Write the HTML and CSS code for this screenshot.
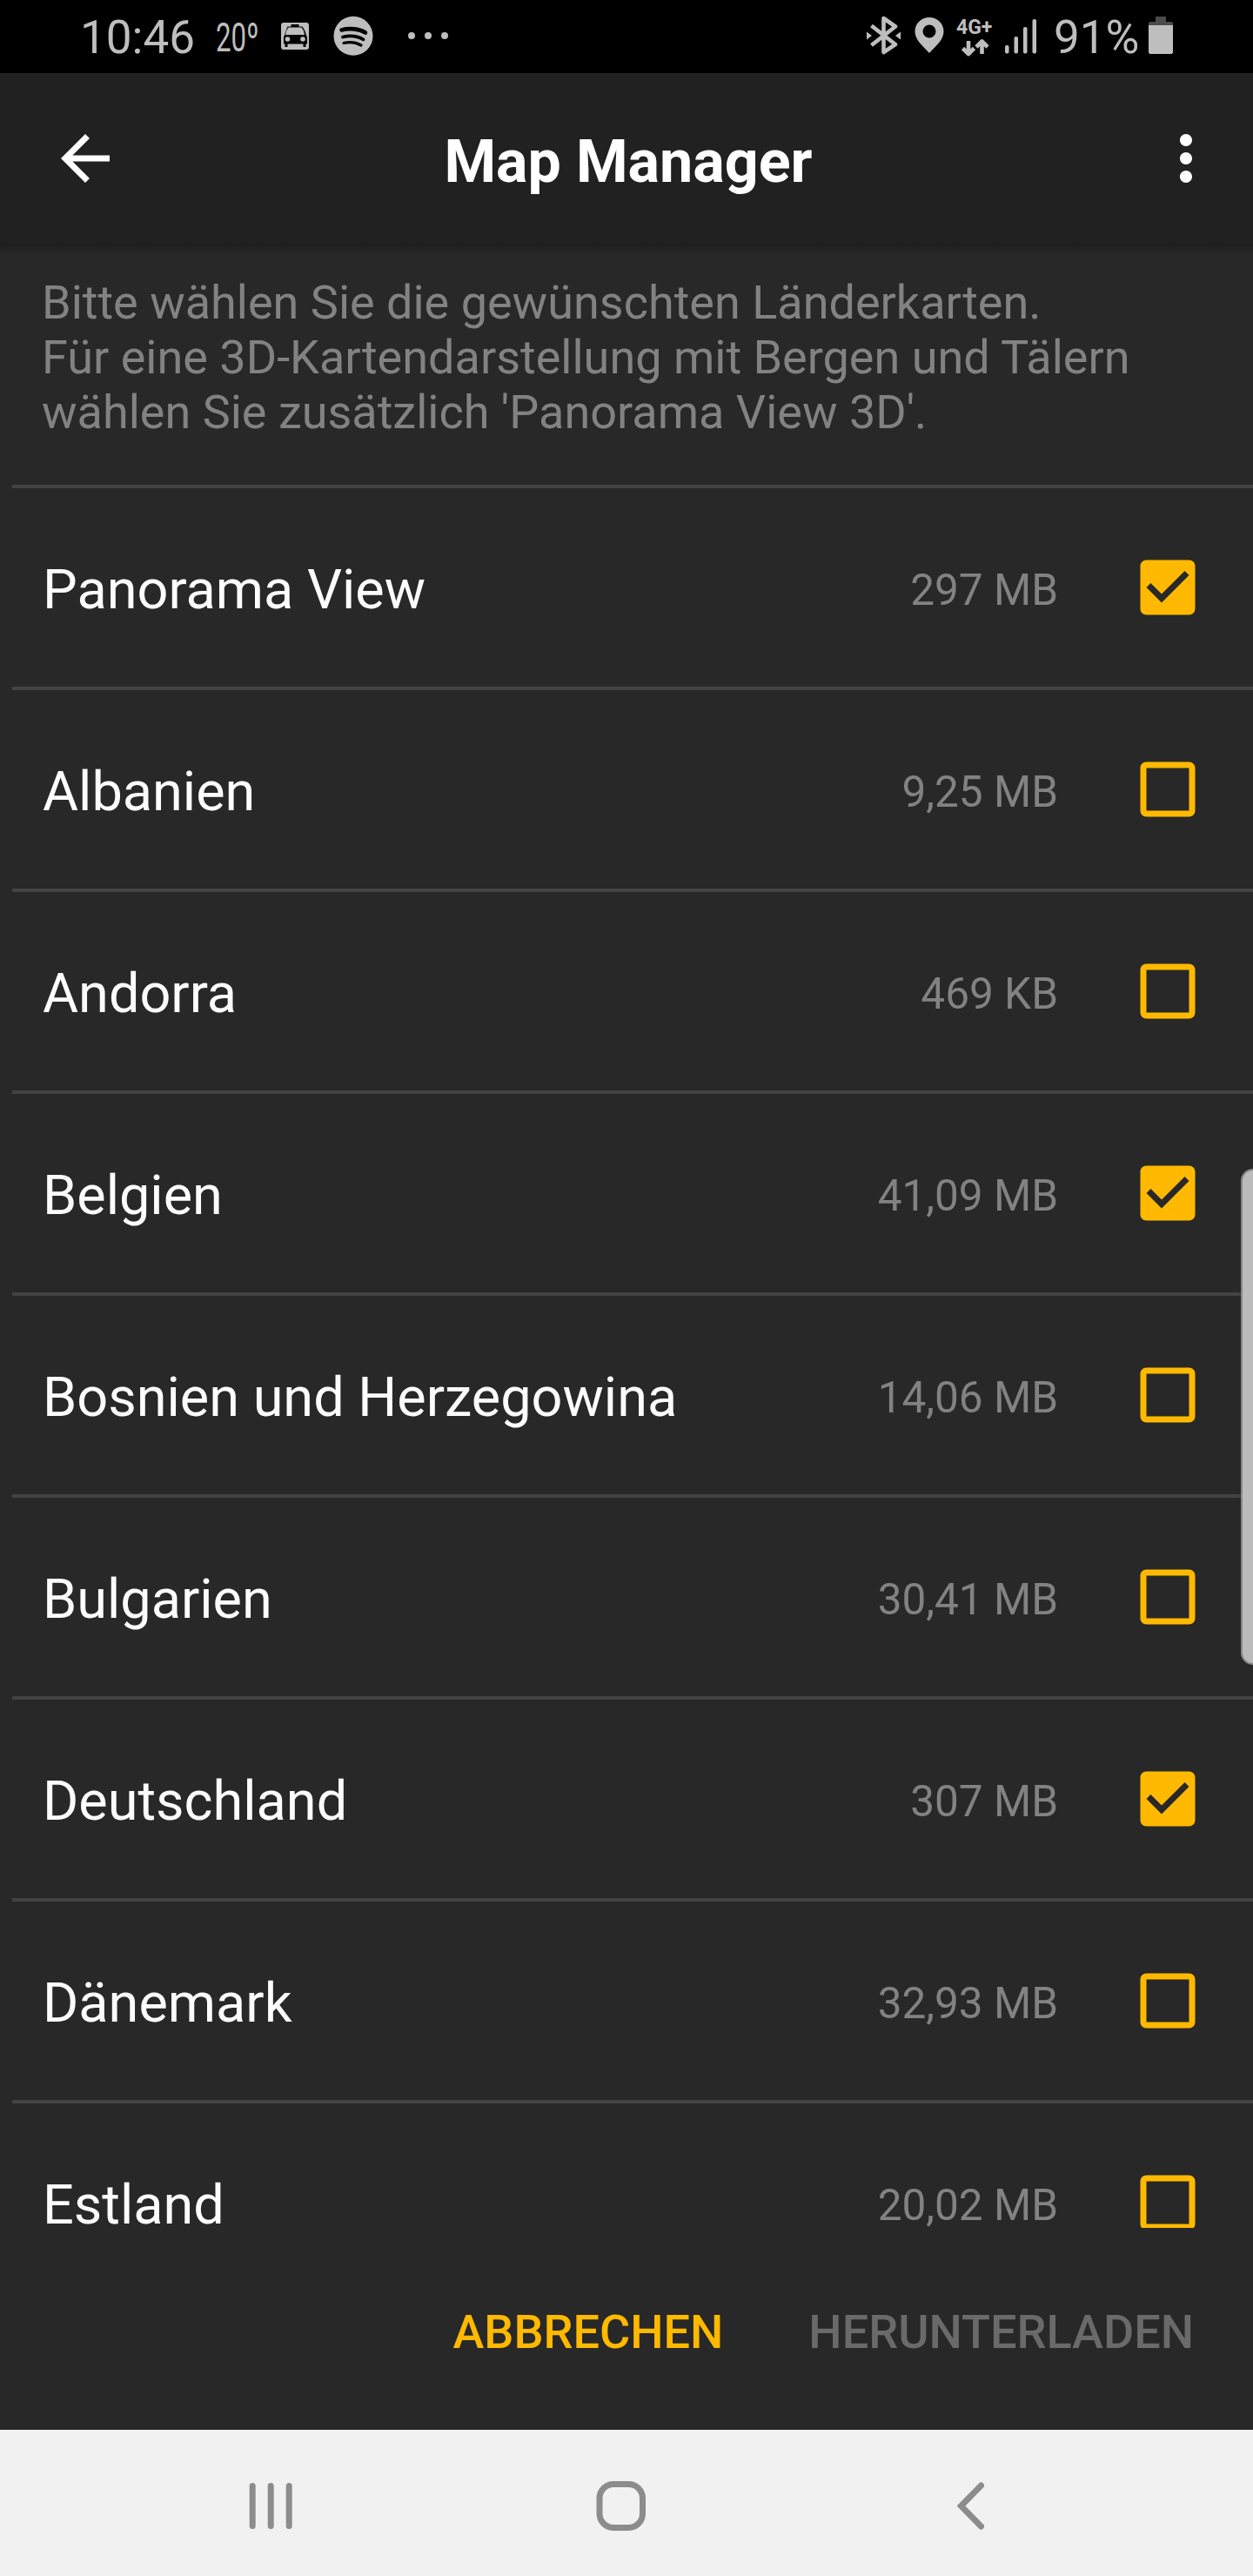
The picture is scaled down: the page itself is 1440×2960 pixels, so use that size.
FILE: index.html
```html
<!DOCTYPE html>
<html lang="de">
<head>
    <meta charset="utf-8">
    <title>Map Manager</title>
    <link rel="stylesheet" href="styles.css">
</head>
<body>
    <svg class="defs">
        <symbol id="box" viewBox="0 0 24 24">
            <path d="M19 5v14H5V5h14m0-2H5c-1.1 0-2 .9-2 2v14c0 1.1.9 2 2 2h14c1.1 0 2-.9 2-2V5c0-1.1-.9-2-2-2z"/>
        </symbol>
        <symbol id="box-checked" viewBox="0 0 24 24">
            <path d="M19 3H5c-1.11 0-2 .9-2 2v14c0 1.1.89 2 2 2h14c1.11 0 2-.9 2-2V5c0-1.1-.89-2-2-2zm-9 14l-5-5 1.41-1.41L10 14.17l7.59-7.59L19 8l-9 9z"/>
        </symbol>
    </svg>

    <div class="screen">
        <div class="statusbar">
            <span class="time">10:46</span>
            <span class="temp">20º</span>
            <svg class="icon-car" width="32" height="84" viewBox="323 0 32 84">
                <rect x="323" y="26" width="32" height="31" rx="3"/>
                <path class="cut" d="M330.500 30.500h4v-2.500h9v2.500h4l3 5 1.500 5 1 2v8h-1.500v3.500h-3v-3.500h-18v3.500h-3v-3.500h-1.500v-8l1-2 1.500-5z"/>
                <path d="M331.500 31.500h15l2.500 4 1 4.500h-22l1-4.500z"/>
                <circle cx="330.500" cy="45" r="2.800"/>
                <circle cx="348" cy="45" r="2.800"/>
            </svg>
            <svg class="icon-music" width="46" height="84" viewBox="383.500 0 46 84">
                <circle cx="406.500" cy="41.300" r="22.500"/>
                <path class="wave" stroke-width="4.600" d="M393 34.500c9-2.500 20-1.500 27.500 3"/>
                <path class="wave" stroke-width="3.800" d="M394.500 42.500c8-2 17-1 23.500 2.800"/>
                <path class="wave" stroke-width="3.200" d="M395.500 49.500c7-1.500 14-.8 20 2.500"/>
            </svg>
            <svg class="icon-more" width="48" height="84" viewBox="468 0 48 84">
                <circle cx="473" cy="41" r="4"/>
                <circle cx="492" cy="41" r="4"/>
                <circle cx="511" cy="41" r="4"/>
            </svg>
            <svg class="icon-bt" width="40" height="84" viewBox="996 0 40 84">
                <path class="line" d="M1001.500 29.500l27.500 21.500-13.500 9V21l13.500 9.500-27.500 21.500"/>
                <path d="M996 36.500l6 4.500-6 4.500zM1035 36.500l-6 4.500 6 4.500z"/>
            </svg>
            <svg class="icon-pin" width="34" height="84" viewBox="1050.500 0 34 84">
                <path fill-rule="evenodd" d="M1067.500 20c-9.300 0-16.500 7-16.500 16 0 10 8.500 16 16.500 25 8-9 16.500-15 16.500-25 0-9-7.200-16-16.500-16zm0 8.500a7.500 7.500 0 1 1 0 15 7.500 7.500 0 0 1 0-15z"/>
            </svg>
            <div class="network">
                <span class="network-type">4G+</span>
                <svg width="34" height="20" viewBox="1103 45 34 20">
                    <path class="arrow" d="M1112 47v14M1105.500 55.500l6.500 6.500 6.500-6.500M1127.500 62V48M1121 54l6.500-6.500 6.500 6.500"/>
                </svg>
            </div>
            <svg class="icon-signal" width="38" height="84" viewBox="1154 0 38 84">
                <rect x="1155" y="52" width="4.500" height="9.500" rx="2"/>
                <rect x="1165.500" y="42" width="4.500" height="19.500" rx="2"/>
                <rect x="1176" y="31" width="4.500" height="30.500" rx="2"/>
                <rect x="1186.500" y="22" width="4.500" height="39.500" rx="2"/>
            </svg>
            <span class="percent">91%</span>
            <svg class="icon-battery" width="28" height="84" viewBox="1320 0 28 84">
                <path class="dim" d="M1328 19h12v6h6.500l1.500 1.500V30h-28v-3.500l1.500-1.500h6.500z"/>
                <path d="M1320 29h28v31.500l-1.500 1.500h-25l-1.500-1.500z"/>
            </svg>
        </div>

        <div class="appbar">
            <svg class="back" width="84" height="84" viewBox="0 0 24 24">
                <path d="M20 11H7.830l5.590-5.590L12 4l-8 8 8 8 1.410-1.410L7.830 13H20v-2z"/>
            </svg>
            <h1>Map Manager</h1>
            <svg class="menu" width="84" height="84" viewBox="0 0 24 24">
                <path d="M12 8c1.100 0 2-.9 2-2s-.9-2-2-2-2 .9-2 2 .9 2 2 2zm0 2c-1.100 0-2 .9-2 2s.9 2 2 2 2-.9 2-2-.9-2-2-2zm0 6c-1.100 0-2 .9-2 2s.9 2 2 2 2-.9 2-2-.9-2-2-2z"/>
            </svg>
        </div>

        <div class="content">
            <p class="intro">Bitte wählen Sie die gewünschten Länderkarten.<br>Für eine 3D-Kartendarstellung mit Bergen und Tälern<br>wählen Sie zusätzlich 'Panorama View 3D'.</p>
            <div class="maps">
                <div class="map">
                    <span class="name">Panorama View</span>
                    <span class="size">297 MB</span>
                    <svg class="check"><use href="#box-checked"/></svg>
                </div>
                <div class="map">
                    <span class="name">Albanien</span>
                    <span class="size">9,25 MB</span>
                    <svg class="check"><use href="#box"/></svg>
                </div>
                <div class="map">
                    <span class="name">Andorra</span>
                    <span class="size">469 KB</span>
                    <svg class="check"><use href="#box"/></svg>
                </div>
                <div class="map">
                    <span class="name">Belgien</span>
                    <span class="size">41,09 MB</span>
                    <svg class="check"><use href="#box-checked"/></svg>
                </div>
                <div class="map">
                    <span class="name">Bosnien und Herzegowina</span>
                    <span class="size">14,06 MB</span>
                    <svg class="check"><use href="#box"/></svg>
                </div>
                <div class="map">
                    <span class="name">Bulgarien</span>
                    <span class="size">30,41 MB</span>
                    <svg class="check"><use href="#box"/></svg>
                </div>
                <div class="map">
                    <span class="name">Deutschland</span>
                    <span class="size">307 MB</span>
                    <svg class="check"><use href="#box-checked"/></svg>
                </div>
                <div class="map">
                    <span class="name">Dänemark</span>
                    <span class="size">32,93 MB</span>
                    <svg class="check"><use href="#box"/></svg>
                </div>
                <div class="map">
                    <span class="name">Estland</span>
                    <span class="size">20,02 MB</span>
                    <svg class="check"><use href="#box"/></svg>
                </div>
            </div>
        </div>

        <div class="actions">
            <span class="cancel">ABBRECHEN</span>
            <span class="download">HERUNTERLADEN</span>
        </div>

        <div class="navbar">
            <svg width="50" height="60" viewBox="286 2850 50 60">
                <path d="M290.200 2856.500v46M311.200 2856.500v46M332.200 2856.500v46"/>
            </svg>
            <svg class="home" width="60" height="60" viewBox="684 2850 60 60">
                <rect x="689" y="2854.500" width="49.500" height="50" rx="16"/>
            </svg>
            <svg width="34" height="60" viewBox="1099 2850 34 60">
                <path d="M1127.500 2856l-23 23.500 23 23.500"/>
            </svg>
        </div>

        <!-- edge panel handle -->
        <div class="edge-handle"></div>
    </div>
</body>
</html>
```
FILE: styles.css
```css
body {
    margin: 0;
    background-color: #282828;
    font-family: Roboto, sans-serif;
}
.defs {
    display: none;
}
.screen {
    position: relative;
    width: 1440px;
    height: 2960px;
    display: flex;
    flex-direction: column;
    overflow: hidden;
}

/* status bar */
.statusbar {
    display: flex;
    align-items: center;
    height: 84px;
    flex: none;
    background-color: #000;
    color: #bebebe;
    fill: #bebebe;
}
.statusbar svg,
.statusbar span {
    flex: none;
    white-space: nowrap;
}
.time {
    width: 132px;
    margin-left: 92px;
    padding-top: 2px;
    font-size: 53px;
}
.temp {
    width: 76px;
    margin-left: 24px;
    margin-right: -1px;
    padding-top: 2px;
    font-size: 46px;
    transform: scaleX(0.68);
    transform-origin: left;
}
.icon-music {
    margin-left: 28px;
}
.icon-more {
    margin-left: 39px;
}
.icon-bt {
    margin-left: 480px;
}
.icon-pin {
    margin-left: 15px;
}
.network {
    display: flex;
    flex-direction: column;
    width: 42px;
    height: 45px;
    margin-left: 14px;
}
.network-type {
    height: 25px;
    font-size: 23px;
    font-weight: bold;
    line-height: 24px;
}
.network svg {
    margin-left: 5px;
}
.icon-signal {
    margin-left: 13px;
}
.percent {
    width: 99px;
    margin-left: 19px;
    padding-top: 2px;
    font-size: 53px;
}
.icon-battery {
    margin-left: 10px;
}
.cut {
    fill: #000;
}
.dim {
    fill: #4b4b4b;
}
.wave {
    fill: none;
    stroke: #000;
    stroke-linecap: round;
}
.line,
.arrow {
    fill: none;
    stroke: #bebebe;
    stroke-width: 4.6;
    stroke-linejoin: round;
}

/* app bar */
.appbar {
    display: flex;
    align-items: center;
    height: 196px;
    flex: none;
    padding: 0 35px 0 56px;
    background-color: #212121;
    fill: #fff;
}
.appbar h1 {
    flex: 1;
    margin: 0;
    padding-top: 7px;
    color: #fff;
    font-size: 68.2px;
    font-weight: bold;
    text-align: center;
}
.menu {
    margin-left: 17px;
}

/* list */
.content {
    height: 2280px;
    flex: none;
    overflow: hidden;
    background: linear-gradient(#1e1e1e, #282828 14px);
}
.intro {
    height: 241px;
    margin: 0;
    padding: 36px 0 0 48px;
    color: #828282;
    font-size: 54px;
    line-height: 63px;
}
.maps {
    margin-left: 14px;
}
.map {
    display: flex;
    align-items: center;
    box-sizing: border-box;
    height: 232px;
    padding: 0 56px 0 35px;
    border-top: 4px solid #434343;
}
.name {
    flex: 1;
    padding-top: 5px;
    color: #fcfcfc;
    font-size: 63px;
}
.size {
    padding-top: 5px;
    color: #828282;
    font-size: 49.5px;
}
.check {
    width: 84px;
    height: 84px;
    margin-left: 84px;
    fill: #ffb900;
}

/* buttons */
.actions {
    display: flex;
    justify-content: flex-end;
    align-items: center;
    gap: 98px;
    height: 226px;
    flex: none;
    padding: 6px 68px 0 0;
    font-size: 54px;
    font-weight: 500;
}
.cancel {
    color: #ffb900;
}
.download {
    color: #6a6a6a;
}

/* navigation bar */
.navbar {
    display: flex;
    align-items: center;
    justify-content: space-between;
    height: 168px;
    flex: none;
    box-sizing: border-box;
    padding: 7px 307px 0 286px;
    background-color: #f1f1f1;
}
.navbar svg {
    fill: none;
    stroke: #8c8c8c;
    stroke-width: 7;
    stroke-linecap: round;
}
.navbar .home {
    margin-right: 7px;
}

.edge-handle {
    position: absolute;
    top: 1343px;
    right: 0;
    box-sizing: border-box;
    width: 14px;
    height: 570px;
    border: 2px solid rgba(130, 130, 130, 0.9);
    border-right: none;
    border-radius: 14px 0 0 14px;
    background-color: rgba(192, 192, 192, 0.97);
}
```
